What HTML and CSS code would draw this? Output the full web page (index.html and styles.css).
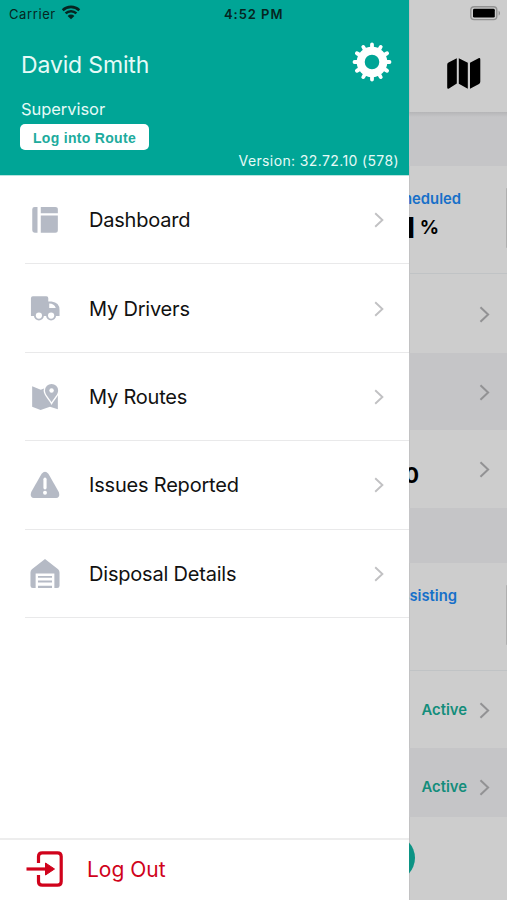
FILE: index.html
```html
<!DOCTYPE html>
<html lang="en">
<head>
  <meta charset="utf-8">
  <title>Supervisor Menu</title>
  <link rel="stylesheet" href="styles.css">
</head>
<body>
  <svg width="0" height="0" class="defs">
    <symbol id="chevron" viewBox="0 0 10 16">
      <path d="M1.2 1.2 8.4 8 1.2 14.8" fill="none" stroke="currentColor" stroke-width="1.9"/>
    </symbol>
  </svg>

  <div class="screen">
    <div class="status-bar">
      <span class="carrier">Carrier</span>
      <svg class="wifi" width="20" height="15" viewBox="0 0 20 15">
        <path d="M1.7 5.2a12 12 0 0 1 16.6 0M4.6 8.4a7.8 7.8 0 0 1 10.8 0" fill="none" stroke="#062521" stroke-width="2.6"/>
        <path d="M6.6 10.9a4.9 4.9 0 0 1 6.8 0L10 14.3z" fill="#062521"/>
      </svg>
      <span class="time">4:52 PM</span>
      <svg class="battery" width="31" height="15" viewBox="0 0 31 15">
        <rect x=".8" y=".8" width="26" height="12.8" rx="3.4" fill="none" stroke="#929292" stroke-width="1.4"/>
        <rect x="3" y="2.8" width="21.8" height="8.8" rx="1.4" fill="#000"/>
        <path d="M28.6 4.8c1.9.8 1.9 4 0 4.8z" fill="#929292"/>
      </svg>
    </div>

    <div class="drawer">
      <div class="profile">
        <div class="profile-top">
          <h1>David Smith</h1>
          <svg class="gear" width="40" height="40" viewBox="-20 -20 40 40">
            <circle r="11.3" fill="none" stroke="#fff" stroke-width="8"/>
            <path d="M13 0H17.5M11.3 6.5 15.1 8.75M6.5 11.3 8.75 15.1M0 13V17.5M-6.5 11.3-8.75 15.1M-11.3 6.5-15.1 8.75M-13 0H-17.5M-11.3-6.5-15.1-8.75M-6.5-11.3-8.75-15.1M0-13V-17.5M6.5-11.3 8.75-15.1M11.3-6.5 15.1-8.75" stroke="#fff" stroke-width="3.8" stroke-linecap="round"/>
          </svg>
        </div>
        <p class="role">Supervisor</p>
        <button class="route-button">Log into Route</button>
        <p class="version">Version: 32.72.10 (578)</p>
      </div>

      <ul class="menu">
        <li>
          <svg class="icon" viewBox="0 0 32 32">
            <path d="M5 2h3v27.5H5q-2.6 0-2.6-2.6V4.6Q2.4 2 5 2zM11.5 2H27q2.7 0 2.7 2.6V8.8H11.500zM11.500 11.2H29.7V26.8q0 2.7-2.7 2.7H11.500z"/>
          </svg>
          <span class="label">Dashboard</span>
          <svg class="chevron" width="10" height="16"><use href="#chevron"/></svg>
        </li>
        <li>
          <svg class="icon" viewBox="0 0 32 32">
            <path fill-rule="evenodd" d="M3 2.5H17.5Q19.5 2.5 19.5 4.5V8H23Q31.5 9 31.5 17V23.5H1V4.5Q1 2.5 3 2.5zM20.5 10.2V14.8H27.5Q26 10.4 20.5 10.200z"/>
            <circle cx="9.500" cy="23" r="5.300"/>
            <circle cx="22.500" cy="23" r="5.300"/>
            <circle class="hole" cx="9.500" cy="23" r="3.300"/>
            <circle class="hole" cx="22.500" cy="23" r="3.300"/>
          </svg>
          <span class="label">My Drivers</span>
          <svg class="chevron" width="10" height="16"><use href="#chevron"/></svg>
        </li>
        <li>
          <svg class="icon" viewBox="0 0 32 32">
            <path d="M2.300 4.500 11.500 8.200 17 6 29.700 12V29L21.300 26.300 11.300 29.800 2.300 26.300z"/>
            <path class="pin" d="M23 2A7 7 0 0 1 30 9C30 13.500 25.500 17 23 21.500 20.500 17 16 13.500 16 9A7 7 0 0 1 23 2z"/>
            <circle class="hole" cx="23" cy="9" r="2.400"/>
          </svg>
          <span class="label">My Routes</span>
          <svg class="chevron" width="10" height="16"><use href="#chevron"/></svg>
        </li>
        <li>
          <svg class="icon" viewBox="0 0 32 32">
            <path d="M12.400 4Q16-.5 19.600 4L30.700 23.500Q32.500 29.500 28 29.900H4Q-.5 29.500 1.300 23.500z"/>
            <path class="mark" d="M16 9.800V19"/>
            <circle class="hole" cx="16" cy="24.300" r="2.100"/>
          </svg>
          <span class="label">Issues Reported</span>
          <svg class="chevron" width="10" height="16"><use href="#chevron"/></svg>
        </li>
        <li>
          <svg class="icon" viewBox="0 0 32 32">
            <path d="M16 0 30 11Q31.500 12.200 31.500 14.500V28.500Q31.500 31 29 31H26V15.500H6V31H3Q.5 31 .5 28.500V14.500Q.5 12.200 2 11z"/>
            <path d="M8.500 18H23.500V20H8.500zM8.500 23H23.500V25H8.500zM8.500 28.500H23.500V31H8.500z"/>
          </svg>
          <span class="label">Disposal Details</span>
          <svg class="chevron" width="10" height="16"><use href="#chevron"/></svg>
        </li>
      </ul>

      <div class="logout">
        <svg width="38" height="36" viewBox="0 0 38 36">
          <path d="M12.500 12V5.500Q12.500 1.800 16.200 1.800H31.500Q35.200 1.800 35.200 5.500V30.500Q35.200 34.200 31.500 34.200H16.200Q12.500 34.200 12.500 30.500V24" fill="none" stroke="#d0021b" stroke-width="3.200"/>
          <path d="M.5 18H22" stroke="#d0021b" stroke-width="3.200"/>
          <path d="M19.500 12 28.500 18 19.500 24z" fill="#d0021b" stroke="#d0021b" stroke-linejoin="round"/>
        </svg>
        <span>Log Out</span>
      </div>
    </div>

    <div class="page">
      <div class="page-header">
        <svg width="36" height="34" viewBox="0 0 36 34">
          <path d="M1.200 8Q1 6.300 2.500 5.500L10.800 1.200V26.500L3 31.600Q1.200 32.400 1.200 30.500zM12.800 1.200 21.800 5.800V31.800L12.800 26.800zM24 5.800 32.500 1.300Q34.300.600 34.300 2.500V24.500Q34.300 26 33 27L24 31.800z"/>
        </svg>
      </div>
      <div class="band band-top"></div>
      <div class="stats stats-scheduled">
        <div class="stat">
          <p class="stat-title">Scheduled</p>
          <p class="stat-value"><b>1</b> %</p>
        </div>
        <div class="next-card"></div>
      </div>
      <div class="row row-first"><svg class="chevron" width="11" height="17"><use href="#chevron"/></svg></div>
      <div class="row row-alt"><svg class="chevron" width="11" height="17"><use href="#chevron"/></svg></div>
      <div class="row row-count"><b>0</b><svg class="chevron" width="11" height="17"><use href="#chevron"/></svg></div>
      <div class="band band-middle"></div>
      <div class="stats stats-assisting">
        <div class="stat"><p class="stat-title">Assisting</p></div>
        <div class="next-card"></div>
      </div>
      <div class="row row-active"><span>Active</span><svg class="chevron" width="11" height="17"><use href="#chevron"/></svg></div>
      <div class="row row-active row-last"><span>Active</span><svg class="chevron" width="11" height="17"><use href="#chevron"/></svg></div>
      <div class="page-footer"><div class="fab"></div></div>
    </div>
  </div>
</body>
</html>
```
FILE: styles.css
```css
* {
  box-sizing: border-box;
}

body {
  margin: 0;
  font-family: Inter, "Liberation Sans", sans-serif;
}

h1, p, ul {
  margin: 0;
  padding: 0;
  font-weight: 400;
}

svg {
  display: block;
  flex-shrink: 0;
}

.defs {
  position: absolute;
}

.screen {
  position: relative;
  display: flex;
  width: 507px;
  height: 900px;
  overflow: hidden;
}

/* status bar sits over the drawer and the page */
.status-bar {
  position: absolute;
  top: 0;
  left: 0;
  z-index: 2;
  display: flex;
  align-items: center;
  width: 100%;
  height: 28px;
  padding: 0 6px 0 9px;
  color: #062521;
  font-size: 13px;
}

.carrier {
  width: 52px;
  letter-spacing: 0.6px;
}

.wifi {
  margin-top: -3px;
}

.time {
  margin-left: 143px;
  font-weight: 600;
  letter-spacing: 0.95px;
}

.battery {
  margin: -1px 0 0 auto;
}

.drawer {
  display: flex;
  flex-direction: column;
  width: 409px;
  background: #fff;
}

.profile {
  display: flex;
  flex-direction: column;
  align-items: flex-start;
  height: 176px;
  padding: 42px 10px 0 21px;
  background: #00a596;
  border-bottom: 1px solid #b8e4df;
  color: #e6faf7;
}

.profile-top {
  display: flex;
  justify-content: space-between;
  width: 100%;
  padding-right: 7px;
}

h1 {
  padding-top: 1px;
  font-size: 23px;
  line-height: 44px;
  letter-spacing: -0.15px;
}

.role {
  margin-top: 12px;
  font-size: 16.5px;
  line-height: 20px;
  letter-spacing: -0.05px;
}

.route-button {
  width: 129px;
  height: 26px;
  margin: 5px 0 0 -1px;
  padding: 1px 0 0;
  border: 0;
  border-radius: 5px;
  background: #fff;
  color: #20ab9d;
  font: bold 14px "Liberation Sans", sans-serif;
  letter-spacing: 0.3px;
}

.version {
  align-self: flex-end;
  margin-top: 2px;
  font-size: 14px;
  line-height: 18px;
  letter-spacing: 0.38px;
}

.menu {
  flex: 1;
  padding-left: 25px;
  list-style: none;
}

.menu li {
  display: flex;
  align-items: center;
  height: 88.4px;
  padding: 1px 25px 0 5px;
  border-bottom: 1px solid #e9e9ea;
}

.icon {
  width: 30px;
  height: 30px;
  margin-right: 29px;
  fill: #b5bac5;
}

.hole {
  fill: #fff;
}

.pin {
  stroke: #fff;
  stroke-width: 3;
  paint-order: stroke;
}

.mark {
  stroke: #fff;
  stroke-width: 3.4;
  stroke-linecap: round;
}

.label {
  flex: 1;
  color: #111;
  font-size: 20px;
  letter-spacing: -0.2px;
}

.chevron {
  color: #c1c1c3;
}

.logout {
  display: flex;
  align-items: center;
  height: 62px;
  padding: 0 0 3px 26px;
  border-top: 2px solid #ededed;
  color: #d0021b;
  font-size: 21px;
}

.logout span {
  margin: 2px 0 0 23px;
}

.page {
  display: flex;
  flex-direction: column;
  flex: 1;
  min-width: 0;
  overflow: hidden;
  background: #cdcdcd;
  box-shadow: inset 1px 0 #c2c2c3;
}

.page-header {
  display: flex;
  align-items: center;
  justify-content: flex-end;
  height: 112px;
  padding: 36px 25px 0 0;
}

.band {
  background: #c5c5c7;
}

.band-top {
  height: 54px;
  background: linear-gradient(#b5b5b7, #c5c5c7 5px);
}

.band-middle {
  height: 55px;
}

.stats {
  display: flex;
  justify-content: flex-end;
  height: 108px;
  border-bottom: 1px solid #c0c3c5;
}

.stat {
  display: flex;
  flex-direction: column;
  align-items: flex-end;
  padding-top: 23px;
}

.stat-title {
  color: #1770c9;
  font-size: 14.8px;
  font-weight: 600;
  line-height: 20px;
}

.stat-value {
  display: flex;
  align-items: center;
  margin-right: 22px;
  font-size: 19px;
  font-weight: 700;
  line-height: 37px;
}

.stat-value b {
  margin-right: 5px;
  font-size: 29px;
}

.next-card {
  width: 2px;
  height: 60px;
  margin: 22px 0 0 45px;
  border-left: 1px solid #b0b0b0;
  border-radius: 3px 0 0 3px;
  background: #bdbdbd;
}

.stats-assisting .next-card {
  margin-left: 49px;
}

.row {
  display: flex;
  align-items: center;
  justify-content: flex-end;
  padding: 1px 17px 0 0;
}

.row .chevron {
  color: #929294;
}

.row-first {
  height: 79px;
}

.row-alt {
  height: 77px;
  background: #c5c5c7;
}

.row-count {
  height: 78px;
}

.row-count b {
  margin: 11px 60px 0 0;
  font-size: 22px;
}

.row-active {
  height: 77px;
  color: #138d7b;
  font-size: 14.8px;
  font-weight: 600;
}

.row-active span {
  margin-right: 12px;
}

.row-last {
  height: 69px;
  padding-top: 9px;
  background: #c5c5c7;
}

.page-footer {
  flex: 1;
  padding-top: 18px;
}

.fab {
  width: 46px;
  height: 46px;
  margin-left: -40px;
  border-radius: 50%;
  background: #0c9384;
}
```
